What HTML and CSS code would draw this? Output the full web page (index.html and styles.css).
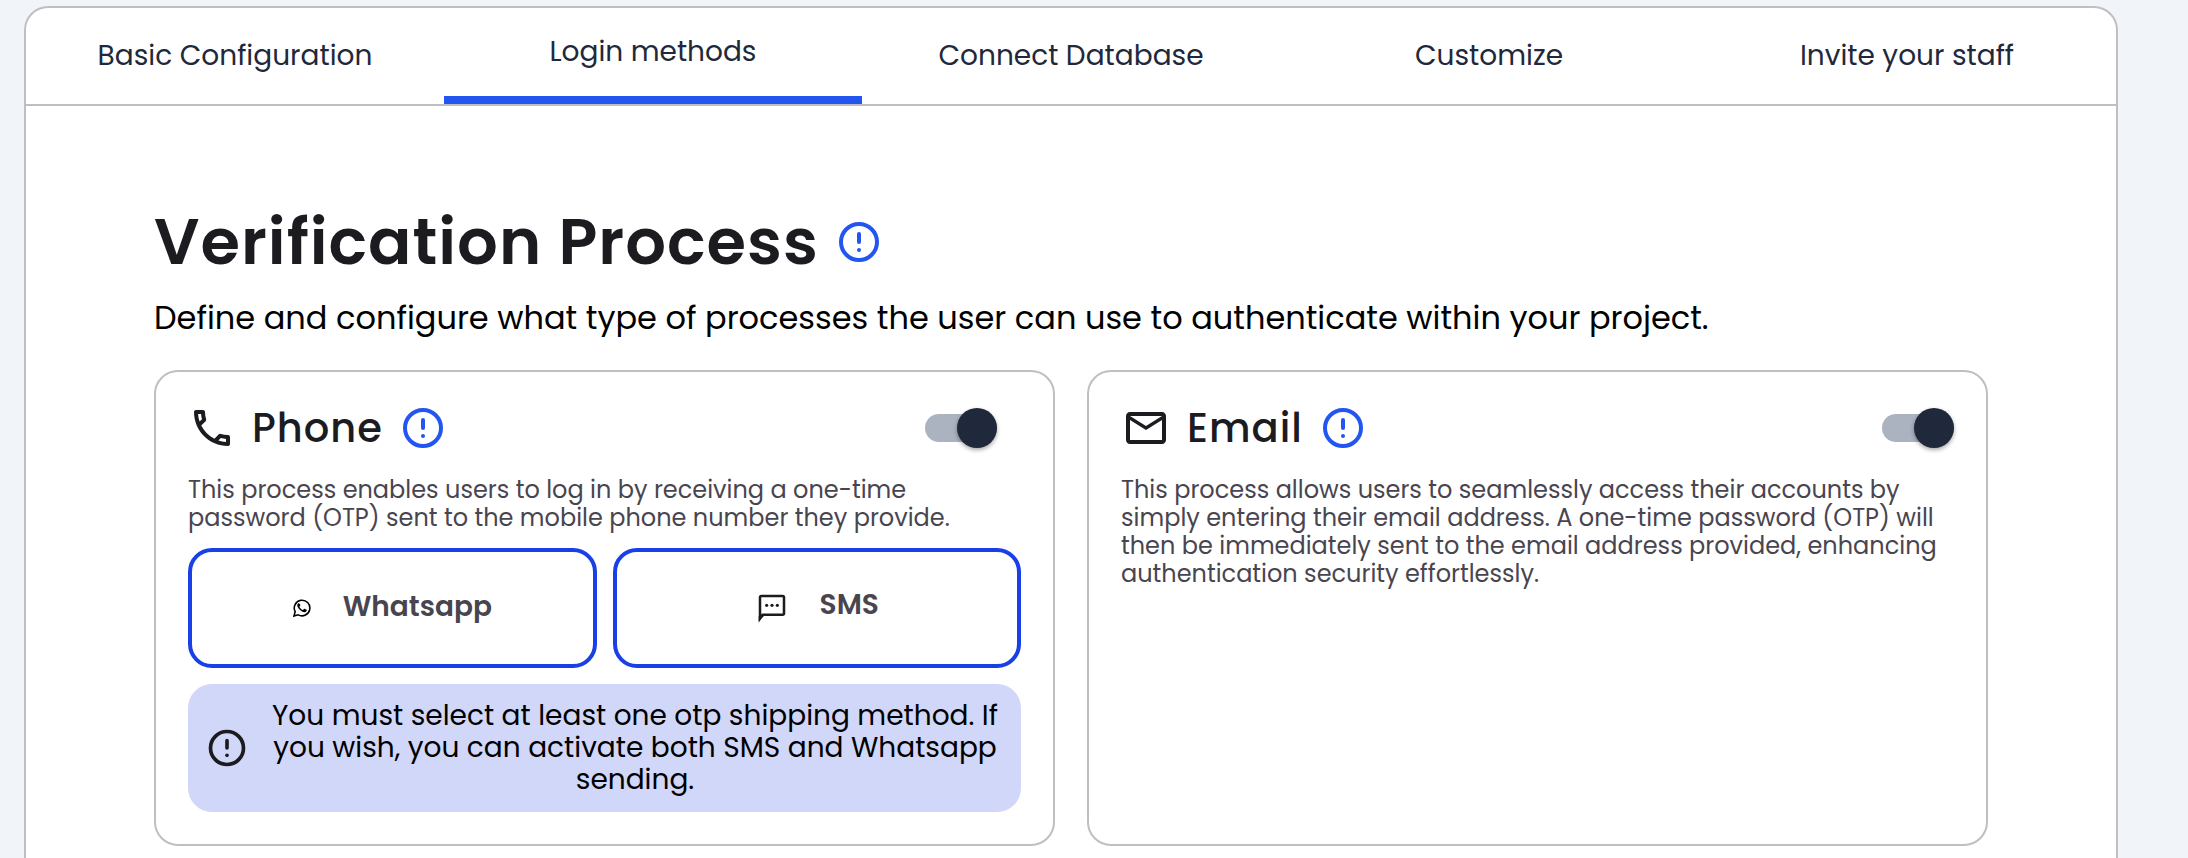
FILE: index.html
```html
<!DOCTYPE html>
<html lang="en">
<head>
<meta charset="utf-8">
<title>Login methods</title>
<link rel="stylesheet" href="styles.css">
</head>
<body>
<svg class="defs" aria-hidden="true">
  <symbol id="info" viewBox="0 0 24 24">
    <circle cx="12" cy="12" r="9" fill="none" stroke="currentColor" stroke-width="2"/>
    <path d="M12 8v4" fill="none" stroke="currentColor" stroke-width="2" stroke-linecap="round"/>
    <circle cx="12" cy="16" r="1" fill="currentColor"/>
  </symbol>
</svg>
<main class="panel">
  <nav class="tabs">
    <a class="tab">Basic Configuration</a>
    <a class="tab active">Login methods</a>
    <a class="tab">Connect Database</a>
    <a class="tab">Customize</a>
    <a class="tab">Invite your staff</a>
  </nav>
  <section class="content">
    <div class="heading">
      <h1>Verification Process</h1>
      <svg class="icon blue"><use href="#info"/></svg>
    </div>
    <p class="subtitle">Define and configure what type of processes the user can use to authenticate within your project.</p>
    <div class="cards">
      <article class="card">
        <header class="card-head phone-head">
          <svg class="icon" viewBox="0 0 24 24"><path fill="currentColor" d="M6.54 5c.06.89.21 1.76.45 2.59l-1.2 1.2c-.41-1.2-.67-2.47-.76-3.79h1.51m9.86 12.02c.85.24 1.72.39 2.6.45v1.49c-1.32-.09-2.59-.35-3.8-.75l1.2-1.19M7.5 3H4c-.55 0-1 .45-1 1 0 9.39 7.61 17 17 17 .55 0 1-.45 1-1v-3.49c0-.55-.45-1-1-1-1.24 0-2.45-.2-3.57-.57-.1-.04-.21-.05-.31-.05-.26 0-.51.1-.71.29l-2.2 2.2c-2.83-1.45-5.15-3.76-6.59-6.59l2.2-2.2c.28-.28.36-.67.25-1.02C8.7 6.45 8.5 5.25 8.5 4c0-.55-.45-1-1-1z"/></svg>
          <h2 class="phone-title">Phone</h2>
          <svg class="icon blue"><use href="#info"/></svg>
          <span class="toggle"><span class="knob"></span></span>
        </header>
        <p class="desc">This process enables users to log in by receiving a one-time password (OTP) sent to the mobile phone number they provide.</p>
        <div class="methods">
          <button class="method">
            <svg class="wa" viewBox="0 0 24 24"><path d="M1.3 22.7l1.6-5.8A10.4 10.4 0 1 1 7 21.1z" fill="none" stroke="#000" stroke-width="2.1"/><path fill="#000" d="M8.6 6.2c-.3-.6-.8-.6-1.2-.5C6.4 6 5.6 7.2 5.7 8.7c.2 2 2 4.5 4.2 6.3 2.2 1.9 4.5 2.9 6.2 2.5 1.5-.3 2.3-1.4 2.3-2.7 0-.3-.1-.5-.4-.6l-2.5-1.2c-.4-.2-.6-.1-.9.2l-1 1.2c-.2.3-.5.3-.8.1-1.8-.8-3.2-2.2-4.1-3.9-.1-.3-.1-.5.1-.7l.9-1.1c.2-.3.2-.5.1-.8z"/></svg>
            <span class="wa-label">Whatsapp</span>
          </button>
          <button class="method">
            <svg class="sms" viewBox="0 0 24 24"><path fill="none" stroke="currentColor" stroke-width="1.9" d="M3 20V4c0-.6.4-1 1-1h16c.6 0 1 .4 1 1v12c0 .6-.4 1-1 1H5z"/><path fill="currentColor" d="M2 18v4l4.5-4.5z"/><circle cx="8" cy="10" r="1.2" fill="currentColor"/><circle cx="12" cy="10" r="1.2" fill="currentColor"/><circle cx="16" cy="10" r="1.2" fill="currentColor"/></svg>
            <span class="sms-label">SMS</span>
          </button>
        </div>
        <div class="alert">
          <svg class="alert-icon"><use href="#info"/></svg>
          <p class="alert-text">You must select at least one otp shipping method. If you wish, you can activate both SMS and Whatsapp sending.</p>
        </div>
      </article>
      <article class="card">
        <header class="card-head email-head">
          <svg class="icon" viewBox="0 0 24 24"><path fill="currentColor" d="M22 6c0-1.1-.9-2-2-2H4c-1.1 0-2 .9-2 2v12c0 1.1.9 2 2 2h16c1.1 0 2-.9 2-2V6zm-2 0l-8 5-8-5h16zm0 12H4V8l8 5 8-5v10z"/></svg>
          <h2 class="email-title">Email</h2>
          <svg class="icon blue"><use href="#info"/></svg>
          <span class="toggle"><span class="knob"></span></span>
        </header>
        <p class="desc">This process allows users to seamlessly access their accounts by simply entering their email address. A one-time password (OTP) will then be immediately sent to the email address provided, enhancing authentication security effortlessly.</p>
      </article>
    </div>
  </section>
</main>
</body>
</html>
```
FILE: styles.css
```css
* { box-sizing: border-box; }

html { overflow: hidden; }
body {
  margin: 0;
  height: 858px;
  overflow: hidden;
  padding: 6px 70px 0 24px;
  background: #f1f5fa;
  font-family: Poppins, Inter, "Open Sans", sans-serif;
  color: #1c1b1f;
}

h1, h2, p { margin: 0; }
.defs { position: absolute; width: 0; height: 0; }

.panel {
  height: 852px;
  background: #fff;
  border: 2px solid #bfbfbf;
  border-bottom: 0;
  border-radius: 24px 24px 0 0;
  overflow: hidden;
}

.tabs {
  display: grid;
  grid-template-columns: repeat(5, 1fr);
  height: 98px;
  border-bottom: 2px solid #bfbfbf;
}
.tab {
  display: flex;
  align-items: center;
  justify-content: center;
  font-size: 28px;
  white-space: nowrap;
  color: #1f293b;
}
.tab.active { border-bottom: 8px solid #2356f1; }

.content { padding: 96px 128px 0; }

.heading { display: flex; align-items: center; gap: 16px; height: 80px; }
h1 {
  width: 665px;
  font-size: 64px;
  line-height: 80px;
  font-weight: 600;
  white-space: nowrap;
}
h1, h2 { letter-spacing: 1px; }
.icon { width: 48px; height: 48px; flex: none; display: block; }
.blue { color: #2356f1; }

.subtitle {
  margin-top: 12px;
  font-size: 32px;
  line-height: 48px;
  white-space: nowrap;
  color: #000;
}

.cards {
  display: grid;
  grid-template-columns: repeat(2, minmax(0, 1fr));
  gap: 32px;
  margin-top: 28px;
}
.card {
  height: 476px;
  padding: 32px;
  border: 2px solid #bfbfbf;
  border-radius: 24px;
}
.card-head { display: flex; align-items: center; gap: 16px; height: 48px; }
.phone-head { padding-right: 24px; }
.email-head { padding-left: 1px; }
h2 {
  font-size: 40px;
  line-height: 48px;
  font-weight: 500;
  white-space: nowrap;
}
.phone-title { width: 131px; }
.email-title { width: 117px; padding-left: 1px; }

.toggle {
  display: flex;
  align-items: center;
  justify-content: flex-end;
  width: 72px;
  height: 28px;
  margin-left: auto;
  border-radius: 14px;
  background: #acb3c0;
}
.knob {
  flex: none;
  width: 40px;
  height: 40px;
  border-radius: 50%;
  background: #1f293b;
  box-shadow: 0 2px 4px rgba(0, 0, 0, 0.35);
}

.desc { margin-top: 24px; font-size: 24px; line-height: 28px; color: #49454f; }

.methods { display: grid; grid-template-columns: 1fr 1fr; gap: 16px; margin-top: 16px; }
.method {
  display: flex;
  align-items: center;
  justify-content: center;
  height: 120px;
  padding: 0;
  border: 4px solid #193fe6;
  border-radius: 24px;
  background: #fff;
  color: #1c1b1f;
  font: inherit;
}
.wa { width: 18px; height: 18px; margin-right: 32px; }
.sms { width: 32px; height: 32px; margin: 0 32px 0 1px; }
.wa-label, .sms-label { font-size: 28px; line-height: 32px; font-weight: 600; color: #49454f; }
.wa-label { padding-bottom: 2px; }
.sms-label { padding-bottom: 6px; }

.alert {
  display: flex;
  align-items: center;
  gap: 22px;
  height: 128px;
  margin-top: 16px;
  padding: 0 22px 0 17px;
  border-radius: 24px;
  background: #d1d7f9;
}
.alert-icon { flex: none; width: 44px; height: 44px; }
.alert-text {
  flex: 1;
  font-size: 28px;
  line-height: 32px;
  text-align: center;
  color: #000;
}
```
